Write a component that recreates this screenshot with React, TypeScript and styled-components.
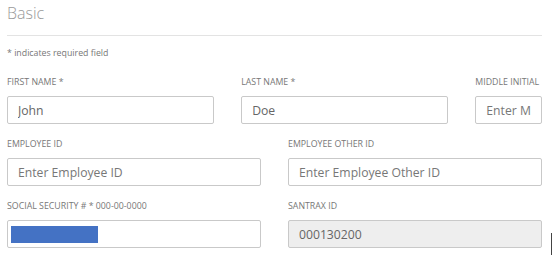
import styled, { createGlobalStyle } from "styled-components";

const GlobalStyle = createGlobalStyle`
  body {
    margin: 0;
    font-family: "Open Sans", "Liberation Sans", sans-serif;
    background: #fff;
  }
`;

const Page = styled.div`
  position: relative;
  width: 554px;
  height: 255px;
  padding: 0 12px 0 7px;
  box-sizing: border-box;
  overflow: hidden;
`;

const Heading = styled.h3`
  margin: 0;
  padding-top: 2px;
  height: 36px;
  box-sizing: border-box;
  font-size: 16px;
  font-weight: 300;
  line-height: 22px;
  color: #9a9a9a;
  border-bottom: 1px solid #e3e3e3;
`;

const Note = styled.p`
  margin: 0;
  padding-top: 11px;
  height: 40px;
  box-sizing: border-box;
  font-size: 8.8px;
  line-height: 12px;
  color: #777;
`;

const Row = styled.div`
  display: flex;
  margin: 0 -13.5px 14px;
`;

const Col = styled.div<{ $span: number }>`
  flex: 0 0 ${(p) => (p.$span / 12) * 100}%;
  padding: 0 13.5px;
  box-sizing: border-box;
`;

const Label = styled.label`
  display: block;
  height: 20px;
  font-size: 8.8px;
  line-height: 12px;
  color: #777;
  text-transform: uppercase;
  white-space: nowrap;
`;

const Input = styled.input<{ $readOnly?: boolean }>`
  display: block;
  width: 100%;
  height: 28px;
  box-sizing: border-box;
  padding: 0 10px;
  border: 1px solid #c9c9c9;
  border-radius: 2px;
  font-family: "Open Sans", "Liberation Sans", sans-serif;
  font-size: 12.2px;
  color: #666;
  background: ${(p) => (p.$readOnly ? "#eeeeee" : "#fff")};
  outline: none;

  &::placeholder {
    color: #777;
    opacity: 1;
  }
`;

const MaskedBox = styled.div`
  display: flex;
  align-items: center;
  height: 28px;
  box-sizing: border-box;
  padding: 0 3px;
  border: 1px solid #c9c9c9;
  border-radius: 2px;
  background: #fff;
`;

const Selection = styled.span`
  display: block;
  width: 87px;
  height: 17px;
  background: #4472c4;
`;

const Caret = styled.div`
  position: absolute;
  left: 551px;
  top: 233px;
  width: 1px;
  height: 22px;
  background: #444;
`;

export default function App() {
  return (
    <>
      <GlobalStyle />
      <Page>
        <Heading>Basic</Heading>
        <Note>* indicates required field</Note>

        <Row>
          <Col $span={5}>
            <Label>First Name *</Label>
            <Input defaultValue="John" />
          </Col>
          <Col $span={5}>
            <Label>Last Name *</Label>
            <Input defaultValue="Doe" />
          </Col>
          <Col $span={2}>
            <Label>Middle Initial</Label>
            <Input placeholder="Enter Middle Initial" />
          </Col>
        </Row>

        <Row>
          <Col $span={6}>
            <Label>Employee ID</Label>
            <Input placeholder="Enter Employee ID" />
          </Col>
          <Col $span={6}>
            <Label>Employee Other ID</Label>
            <Input placeholder="Enter Employee Other ID" />
          </Col>
        </Row>

        <Row>
          <Col $span={6}>
            <Label>Social Security # * 000-00-0000</Label>
            <MaskedBox>
              <Selection />
            </MaskedBox>
          </Col>
          <Col $span={6}>
            <Label>Santrax ID</Label>
            <Input $readOnly readOnly defaultValue="000130200" />
          </Col>
        </Row>

        <Caret />
      </Page>
    </>
  );
}
